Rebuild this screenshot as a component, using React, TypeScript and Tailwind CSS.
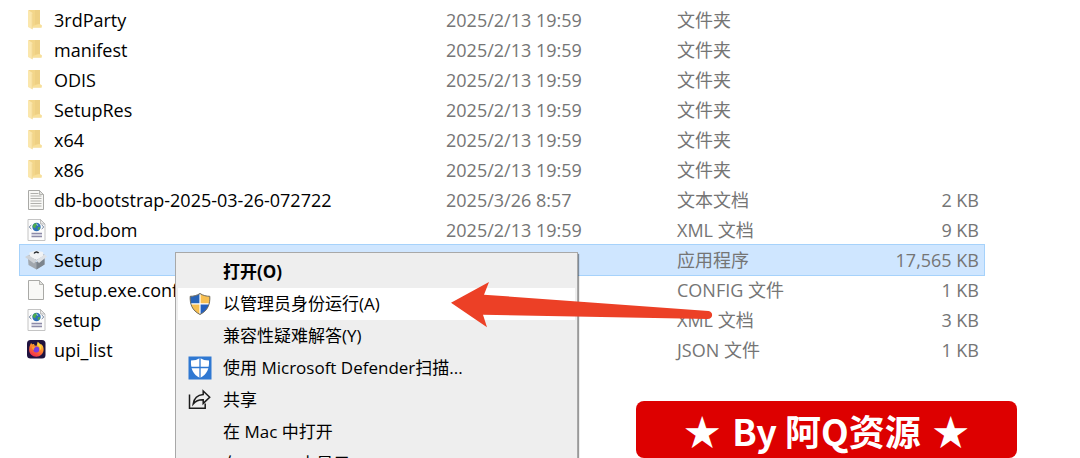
// App.tsx
import * as React from "react";

type IconKind = "folder" | "text" | "xml" | "installer" | "blank" | "firefox";

type FileRow = {
  name: string;
  icon: IconKind;
  modified: string;
  type: string;
  size?: string;
  selected?: boolean;
};

type MenuEntry = {
  label: string;
  icon?: React.ReactNode;
  bold?: boolean;
  active?: boolean;
};

const files: FileRow[] = [
  { name: "3rdParty", icon: "folder", modified: "2025/2/13 19:59", type: "文件夹" },
  { name: "manifest", icon: "folder", modified: "2025/2/13 19:59", type: "文件夹" },
  { name: "ODIS", icon: "folder", modified: "2025/2/13 19:59", type: "文件夹" },
  { name: "SetupRes", icon: "folder", modified: "2025/2/13 19:59", type: "文件夹" },
  { name: "x64", icon: "folder", modified: "2025/2/13 19:59", type: "文件夹" },
  { name: "x86", icon: "folder", modified: "2025/2/13 19:59", type: "文件夹" },
  { name: "db-bootstrap-2025-03-26-072722", icon: "text", modified: "2025/3/26 8:57", type: "文本文档", size: "2 KB" },
  { name: "prod.bom", icon: "xml", modified: "2025/2/13 19:59", type: "XML 文档", size: "9 KB" },
  { name: "Setup", icon: "installer", modified: "", type: "应用程序", size: "17,565 KB", selected: true },
  { name: "Setup.exe.conf", icon: "blank", modified: "", type: "CONFIG 文件", size: "1 KB" },
  { name: "setup", icon: "xml", modified: "", type: "XML 文档", size: "3 KB" },
  { name: "upi_list", icon: "firefox", modified: "", type: "JSON 文件", size: "1 KB" },
];

function FolderIcon() {
  return (
    <svg viewBox="0 0 22 22" className="h-[22px] w-[22px]" aria-hidden="true">
      <path d="M2.5 1H14v14.500l1.500 0.600V18.500H5z" fill="#f3d68a" />
      <path d="M9 1h5v14.500h-5z" fill="#eed084" />
      <path d="M13 15l2.600 1.200V18.500H6.500V17z" fill="#f8e09a" />
      <path d="M2 1l4.600 3V20.500L2 18z" fill="#fbe7ad" />
      <path d="M6.200 4.500v15.600" stroke="#e9c97c" strokeWidth="0.500" />
    </svg>
  );
}

function Page({ children }: { children?: React.ReactNode }) {
  return (
    <svg viewBox="0 0 22 22" className="h-[22px] w-[22px]" aria-hidden="true">
      <path d="M2.500 1.500h11l4 4V20.500h-15z" fill="#f8f8f6" stroke="#a9a9a6" />
      <path d="M13.500 1.500v4h4z" fill="#e3e3e0" stroke="#a9a9a6" strokeWidth="0.800" />
      {children}
    </svg>
  );
}

function XmlIcon() {
  return (
    <svg viewBox="0 0 22 22" className="h-[22px] w-[22px]" aria-hidden="true">
      <path d="M2 0.500h12.500l4.500 4.500V21.500H2z" fill="#fcfcfc" stroke="#c4c4c4" />
      <path d="M14.500 0.500v4.500h4.500z" fill="#e8e8e8" stroke="#b0b0b0" strokeWidth="0.800" />
      <circle cx="10.500" cy="8" r="4.200" fill="#2d6fb7" />
      <path d="M7.500 5.500c2-2 3.500-1.500 3.500 0s-1.500 1.500-1.500 3-2.500 0-3-1zM11.500 8.500c1.500-1 2.800-.5 2.800.2s-1 2-2.200 2.300z" fill="#4cab4b" />
      <path d="M10.300 5l1.800 1.500" stroke="#bfe3f2" strokeWidth="0.900" />
      <path d="M5.300 6L3.200 8l2.100 2M15.700 6l2.100 2-2.100 2" fill="none" stroke="#6b7f9c" />
      <path d="M5.500 14.500h10.500M5.500 17.500h10.500" stroke="#8d8ba8" strokeWidth="1.500" />
      <path d="M5.500 16h10.500" stroke="#c2c1d4" />
    </svg>
  );
}

function InstallerIcon() {
  return (
    <svg viewBox="0 0 22 22" className="h-[22px] w-[22px] overflow-visible" aria-hidden="true">
      <path d="M2 9.500l8.500 3.500 8-4v6.500L10.500 20.500 2.500 16z" fill="#a1a7ae" />
      <path d="M10.500 13l8-4v6.500l-8 5z" fill="#7c848d" />
      <path d="M2 6.500L10.500 3l8.500 3-8.500 5.500z" fill="#858b93" />
      <path d="M3.500 3.500L10 1.500l7 1.500 0.500 4-6.800 4L3.500 8z" fill="#f1f3f5" />
      <path d="M8.200 4.600c.6-1.900 3.400-2.300 4.400-.4" fill="none" stroke="#22262a" strokeWidth="1.500" />
      <path d="M-1 8L2.500 6l8 5.500-2.500 3z" fill="#cdd1d6" />
      <path d="M21 7.500L18.500 5.500l-8 6 2.500 2.500z" fill="#dfe2e6" />
    </svg>
  );
}

function FirefoxIcon() {
  return (
    <svg viewBox="0 0 22 22" className="h-[22px] w-[22px]" aria-hidden="true">
      <defs>
        <linearGradient id="ff-tail" x1="0.800" y1="0" x2="0.300" y2="1">
          <stop offset="0" stopColor="#ffe14a" />
          <stop offset="0.450" stopColor="#ff8a2a" />
          <stop offset="1" stopColor="#f0264f" />
        </linearGradient>
      </defs>
      <rect x="1" y="1" width="18.500" height="18.500" rx="3.500" fill="#20123f" />
      <path
        d="M4.200 5.700c.3-.9.8-1.400 1.200-1.700 0 .7.300 1.100.7 1.400.8-.5 1.800-.6 2.700-.4-.6.3-1 .8-1.100 1.300 1.300.1 1.700.4 2.500.7 1.200-.8.700-3 1.600-4.300.9 1.200 2 1.700 3.200 2.900.2.200.4-.1.300-.6 1.500 1.500 2.400 3.400 2.300 5.800-.2 4-3.300 6.900-7.300 6.900-4.100 0-7.200-3.100-7.200-7 0-1.900.4-3.600 1.100-5z"
        fill="url(#ff-tail)"
      />
      <circle cx="10.300" cy="10.500" r="3" fill="#7a3be0" />
      <path d="M5.800 8.100c1.300-.6 2.700-.2 3.700.6-1.500.2-2 1.200-1.300 2.300-1.300-.1-2.200-1.300-2.400-2.900z" fill="#ff9a2e" />
      <path d="M11.500 6c2.200 1.300 2.900 3.500 1.900 5.500 1.700-.7 2.300-2.700 1.500-4.500-.8-1.500-2-2.200-2.500-3.600z" fill="#ffd83d" />
    </svg>
  );
}

function FileIcon({ kind }: { kind: IconKind }) {
  if (kind === "folder") return <FolderIcon />;
  if (kind === "xml") return <XmlIcon />;
  if (kind === "installer") return <InstallerIcon />;
  if (kind === "firefox") return <FirefoxIcon />;
  if (kind === "blank") return <Page />;
  return (
    <Page>
      <path d="M4.500 4.500h8M4.500 7h11M4.500 9.500h11M4.500 12h11M4.500 14.500h11M4.500 17h11" stroke="#b0b0ad" />
    </Page>
  );
}

function AdminShield() {
  return (
    <svg viewBox="0 0 24 24" className="h-6 w-6" aria-hidden="true">
      <clipPath id="uac">
        <path d="M12 1.500C9 3.500 5.500 4.300 2.200 4.300 1.800 12 4 18.500 12 22.500 20 18.500 22.200 12 21.800 4.300 18.500 4.300 15 3.500 12 1.500z" />
      </clipPath>
      <g clipPath="url(#uac)">
        <path d="M0 0h12v12H0z" fill="#2864b8" />
        <path d="M12 0h12v12H12z" fill="#f8bf50" />
        <path d="M0 12h12v12H0z" fill="#f8bf50" />
        <path d="M12 12h12v12H12z" fill="#2460bd" />
        <path d="M12 0v24M0 11.800h24" stroke="#fff" strokeWidth="1.200" />
      </g>
      <path
        d="M12 1.500C9 3.500 5.500 4.300 2.200 4.300 1.800 12 4 18.500 12 22.500 20 18.500 22.200 12 21.800 4.300 18.500 4.300 15 3.500 12 1.500z"
        fill="none"
        stroke="#6f6a5c"
      />
    </svg>
  );
}

function DefenderIcon() {
  return (
    <svg viewBox="0 0 24 24" className="h-6 w-6" aria-hidden="true">
      <path d="M0.500 0.500h23v23h-23z" fill="#2f78d2" />
      <path d="M12 2C9.500 3.700 6.500 4.500 3 4.500 2.500 12.500 5 18.500 12 22 19 18.500 21.500 12.500 21 4.500 17.500 4.500 14.500 3.700 12 2z" fill="#fff" />
      <path d="M12 1v22M2 11.500h20" stroke="#2f78d2" strokeWidth="1.300" />
    </svg>
  );
}

function ShareIcon() {
  return (
    <svg viewBox="0 0 24 24" className="h-6 w-6" fill="none" stroke="#1c1c1c" strokeWidth="1.500" aria-hidden="true">
      <path d="M1.500 6.500v13.700h15.700v-4.700" />
      <path d="M15.200 3l6.500 6.200-6.500 6.200v-3.600c-4.500-.2-7.500 1.200-10 4.200.8-5.500 4-9 10-9.500z" />
    </svg>
  );
}

const menu: MenuEntry[] = [
  { label: "打开(O)", bold: true },
  { label: "以管理员身份运行(A)", icon: <AdminShield />, active: true },
  { label: "兼容性疑难解答(Y)" },
  { label: "使用 Microsoft Defender扫描...", icon: <DefenderIcon /> },
  { label: "共享", icon: <ShareIcon /> },
  { label: "在 Mac 中打开" },
  { label: "在 Finder 中显示" },
];

function FileTable() {
  return (
    <div className="pt-[5px] pr-24 pl-5">
      <table className="w-full table-fixed border-collapse text-left text-[18px]">
        <colgroup>
          <col className="w-[426px]" />
          <col className="w-[231px]" />
          <col className="w-[150px]" />
          <col />
        </colgroup>
        <tbody>
          {files.map((f, i) => (
            <tr key={i} className={f.selected ? "bg-[#cfe6ff] outline outline-[#a6d2fb]" : ""}>
              <td className="h-[30px] p-0 pl-1.5">
                <span className="flex items-center gap-1.5 whitespace-nowrap text-black">
                  <FileIcon kind={f.icon} />
                  {f.name}
                </span>
              </td>
              <td className="p-0 whitespace-nowrap">{f.modified}</td>
              <td className="p-0 whitespace-nowrap">{f.type}</td>
              <td className="p-0 pr-[5px] text-right whitespace-nowrap">{f.size}</td>
            </tr>
          ))}
        </tbody>
      </table>
    </div>
  );
}

function ContextMenu() {
  return (
    <div
      role="menu"
      className="absolute top-[252px] left-[175px] w-[403px] border border-[#a8a8a8] bg-[#eeeeee] px-0.5 py-[3px] shadow-[1px_2px_1px_rgba(0,0,0,0.4)]"
    >
      {menu.map((m) => (
        <button
          key={m.label}
          type="button"
          role="menuitem"
          className={`flex h-8 w-full items-center text-left whitespace-nowrap text-black ${m.active ? "bg-white" : ""} ${m.bold ? "font-bold" : ""}`}
        >
          <span className="flex w-[45px] shrink-0 pl-2.5">{m.icon}</span>
          {m.label}
        </button>
      ))}
    </div>
  );
}

export default function App() {
  return (
    <main className="relative h-screen overflow-hidden bg-white font-['Open_Sans','Noto_Sans_CJK_SC',sans-serif] text-[17px] leading-[24px] text-[#757575]">
      <FileTable />
      <ContextMenu />

      {/* pointer to the "run as administrator" entry */}
      <svg viewBox="0 0 264 48" className="absolute top-[281px] left-[450px] h-12 w-[264px]" aria-hidden="true">
        <path d="M1 21.700L39 1l-5 12.700L258.500 30c5 .6 5 8 -1 8L33 33.700l4 12.600z" fill="#ec4026" />
      </svg>

      <div className="absolute right-[63px] bottom-0 flex h-[57px] w-[381px] items-center justify-center gap-3 rounded-lg bg-[#dd0000] text-[36px] leading-[48px] font-bold whitespace-nowrap text-white font-['Noto_Sans_CJK_SC',sans-serif]">
        <span>★</span>
        <span>By 阿Q资源</span>
        <span>★</span>
      </div>
    </main>
  );
}
